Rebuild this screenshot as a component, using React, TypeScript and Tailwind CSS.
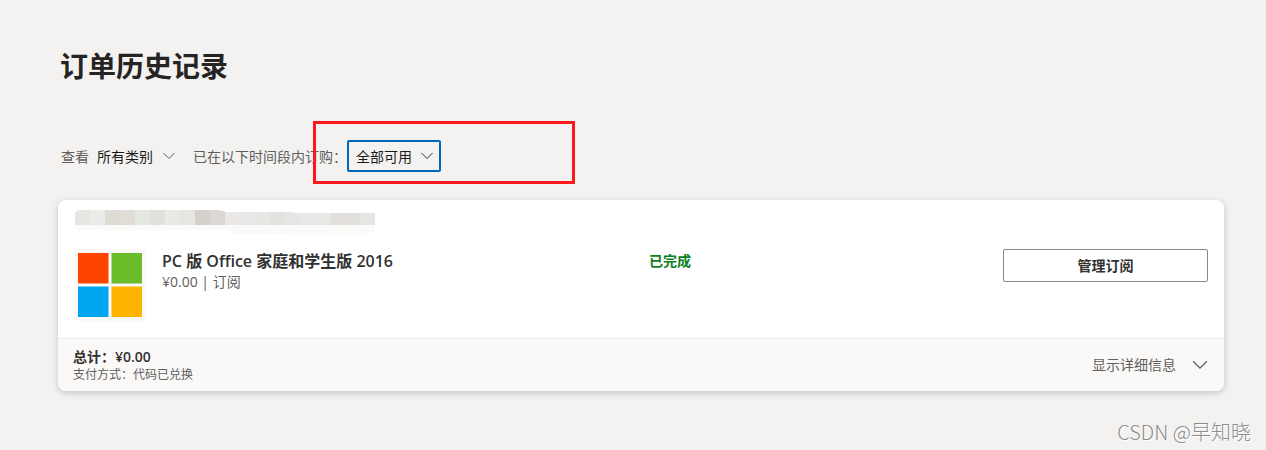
interface Order {
  id: number;
  title: string;
  price: string;
  kind: string;
  status: string;
  payment: string;
}

const orders: Order[] = [
  {
    id: 1,
    title: "PC 版 Office 家庭和学生版 2016",
    price: "¥0.00",
    kind: "订阅",
    status: "已完成",
    payment: "代码已兑换",
  },
];

const mosaic = [
  "#e7e6e3", "#ebebe9", "#dddcd5", "#e0ddd6", "#e5e7e1",
  "#e2e0da", "#e9e9e8", "#e6e5e2", "#d5d1ca", "#dcd9d4",
  "#ece8e5", "#e9e8e6", "#e8e7e5", "#e3e2df", "#e7e6e4",
  "#e9e8e6", "#e8e8e6", "#e3e0db", "#e2e0dc", "#e6e5e3",
];

function Chevron({ className }: { className: string }) {
  return (
    <svg viewBox="0 0 16 16" fill="none" stroke="currentColor" className={className} aria-hidden="true">
      <path d="M2.5 5L8 10.5L13.5 5" />
    </svg>
  );
}

// Número do pedido oculto
function HiddenNumber() {
  return (
    <svg width="300" height="24" viewBox="0 0 300 24" className="ml-px block" aria-hidden="true">
      <defs>
        <clipPath id="strip">
          <path d="M3 0H145V1H150V2H218V3H300V23H220L208 24H162L150 20H4L0 17V3Z" />
        </clipPath>
      </defs>
      <g clipPath="url(#strip)" shapeRendering="crispEdges">
        <rect width="300" height="24" fill="#fafaf9" />
        {mosaic.map((color, index) => (
          <rect key={index} x={index * 15} width="15" height="15" fill={color} />
        ))}
      </g>
    </svg>
  );
}

function ProductLogo() {
  return (
    <svg viewBox="0 0 72 72" className="size-[72px] shrink-0" role="img" aria-label="Microsoft">
      <rect width="72" height="72" fill="#faf9f8" />
      <rect x="4" y="4" width="30.5" height="30.5" fill="#ff4400" />
      <rect x="37.5" y="4" width="30.5" height="30.5" fill="#6abc28" />
      <rect x="4" y="37.5" width="30.5" height="30.5" fill="#00a5ef" />
      <rect x="37.5" y="37.5" width="30.5" height="30.5" fill="#ffb500" />
    </svg>
  );
}

function Filters() {
  return (
    <div className="mt-[54px] flex h-8 items-center text-sm text-[#605e5c]">
      <label htmlFor="category" className="ml-[3px] pt-0.5">查看</label>
      <div className="relative ml-2">
        <select id="category" className="h-8 w-20 appearance-none pt-0.5 text-[#1b1a19] outline-none">
          <option>所有类别</option>
        </select>
        <Chevron className="pointer-events-none absolute top-2 right-0 size-4" />
      </div>
      <label htmlFor="period" className="ml-4 pt-0.5">已在以下时间段内订购：</label>
      <div className="relative">
        <select
          id="period"
          className="h-8 w-[94px] appearance-none rounded-xs border-2 border-[#0067b8] px-[7px] pt-0.5 text-[#1b1a19] outline-none"
        >
          <option>全部可用</option>
        </select>
        <Chevron className="pointer-events-none absolute top-2 right-1.5 size-4 text-[#323130]" />
        <div className="pointer-events-none absolute -top-[19px] -left-[34px] h-[63px] w-[262px] border-3 border-[#fd1820]" />
      </div>
    </div>
  );
}

function OrderCard({ order }: { order: Order }) {
  return (
    <article className="mt-7 overflow-hidden rounded-lg bg-white shadow-[0_2px_6px_rgba(0,0,0,0.2)]">
      <div className="px-4 pt-2.5 pb-[17px]">
        <HiddenNumber />
        <div className="mt-[15px] grid grid-cols-2 gap-4">
          <div className="flex gap-4">
            <ProductLogo />
            <div>
              <h2 className="text-base leading-6 font-semibold text-[#323130]">{order.title}</h2>
              <p className="text-sm leading-[18px] text-[#605e5c]">
                {order.price} | {order.kind}
              </p>
            </div>
          </div>
          <div className="flex items-start justify-between">
            <p className="text-sm leading-6 font-bold text-[#0b8020]">{order.status}</p>
            <button className="h-[33px] w-[205px] rounded-xs border border-[#8a8886] text-sm font-bold text-[#323130]">
              管理订阅
            </button>
          </div>
        </div>
      </div>
      <div className="flex items-center justify-between border-t border-[#edebe9] bg-[#faf9f8] py-2 pr-3.5 pl-[15px]">
        <div>
          <p className="text-sm leading-5 font-semibold text-[#323130]">总计：{order.price}</p>
          <p className="text-xs leading-4 text-[#605e5c]">支付方式：{order.payment}</p>
        </div>
        <button className="flex items-center gap-3.5 text-sm text-[#605e5c]">
          显示详细信息
          <Chevron className="size-5" />
        </button>
      </div>
    </article>
  );
}

function App() {
  return (
    <main className="relative min-h-screen bg-[#f3f2f0] pt-[46px] pr-[42px] pl-[58px] font-['Open_Sans','Noto_Sans_CJK_SC',sans-serif]">
      <h1 className="ml-0.5 text-[28px] leading-10 font-bold text-[#252423]">订单历史记录</h1>
      <Filters />
      {orders.map((order) => (
        <OrderCard key={order.id} order={order} />
      ))}
      <p className="absolute right-[15px] bottom-1 font-['Noto_Sans_CJK_SC',sans-serif] text-xl leading-7 font-light text-[#8c8c8c] [text-shadow:1px_1px_0_#ffffff]">
        CSDN @早知晓
      </p>
    </main>
  );
}

export default App;
